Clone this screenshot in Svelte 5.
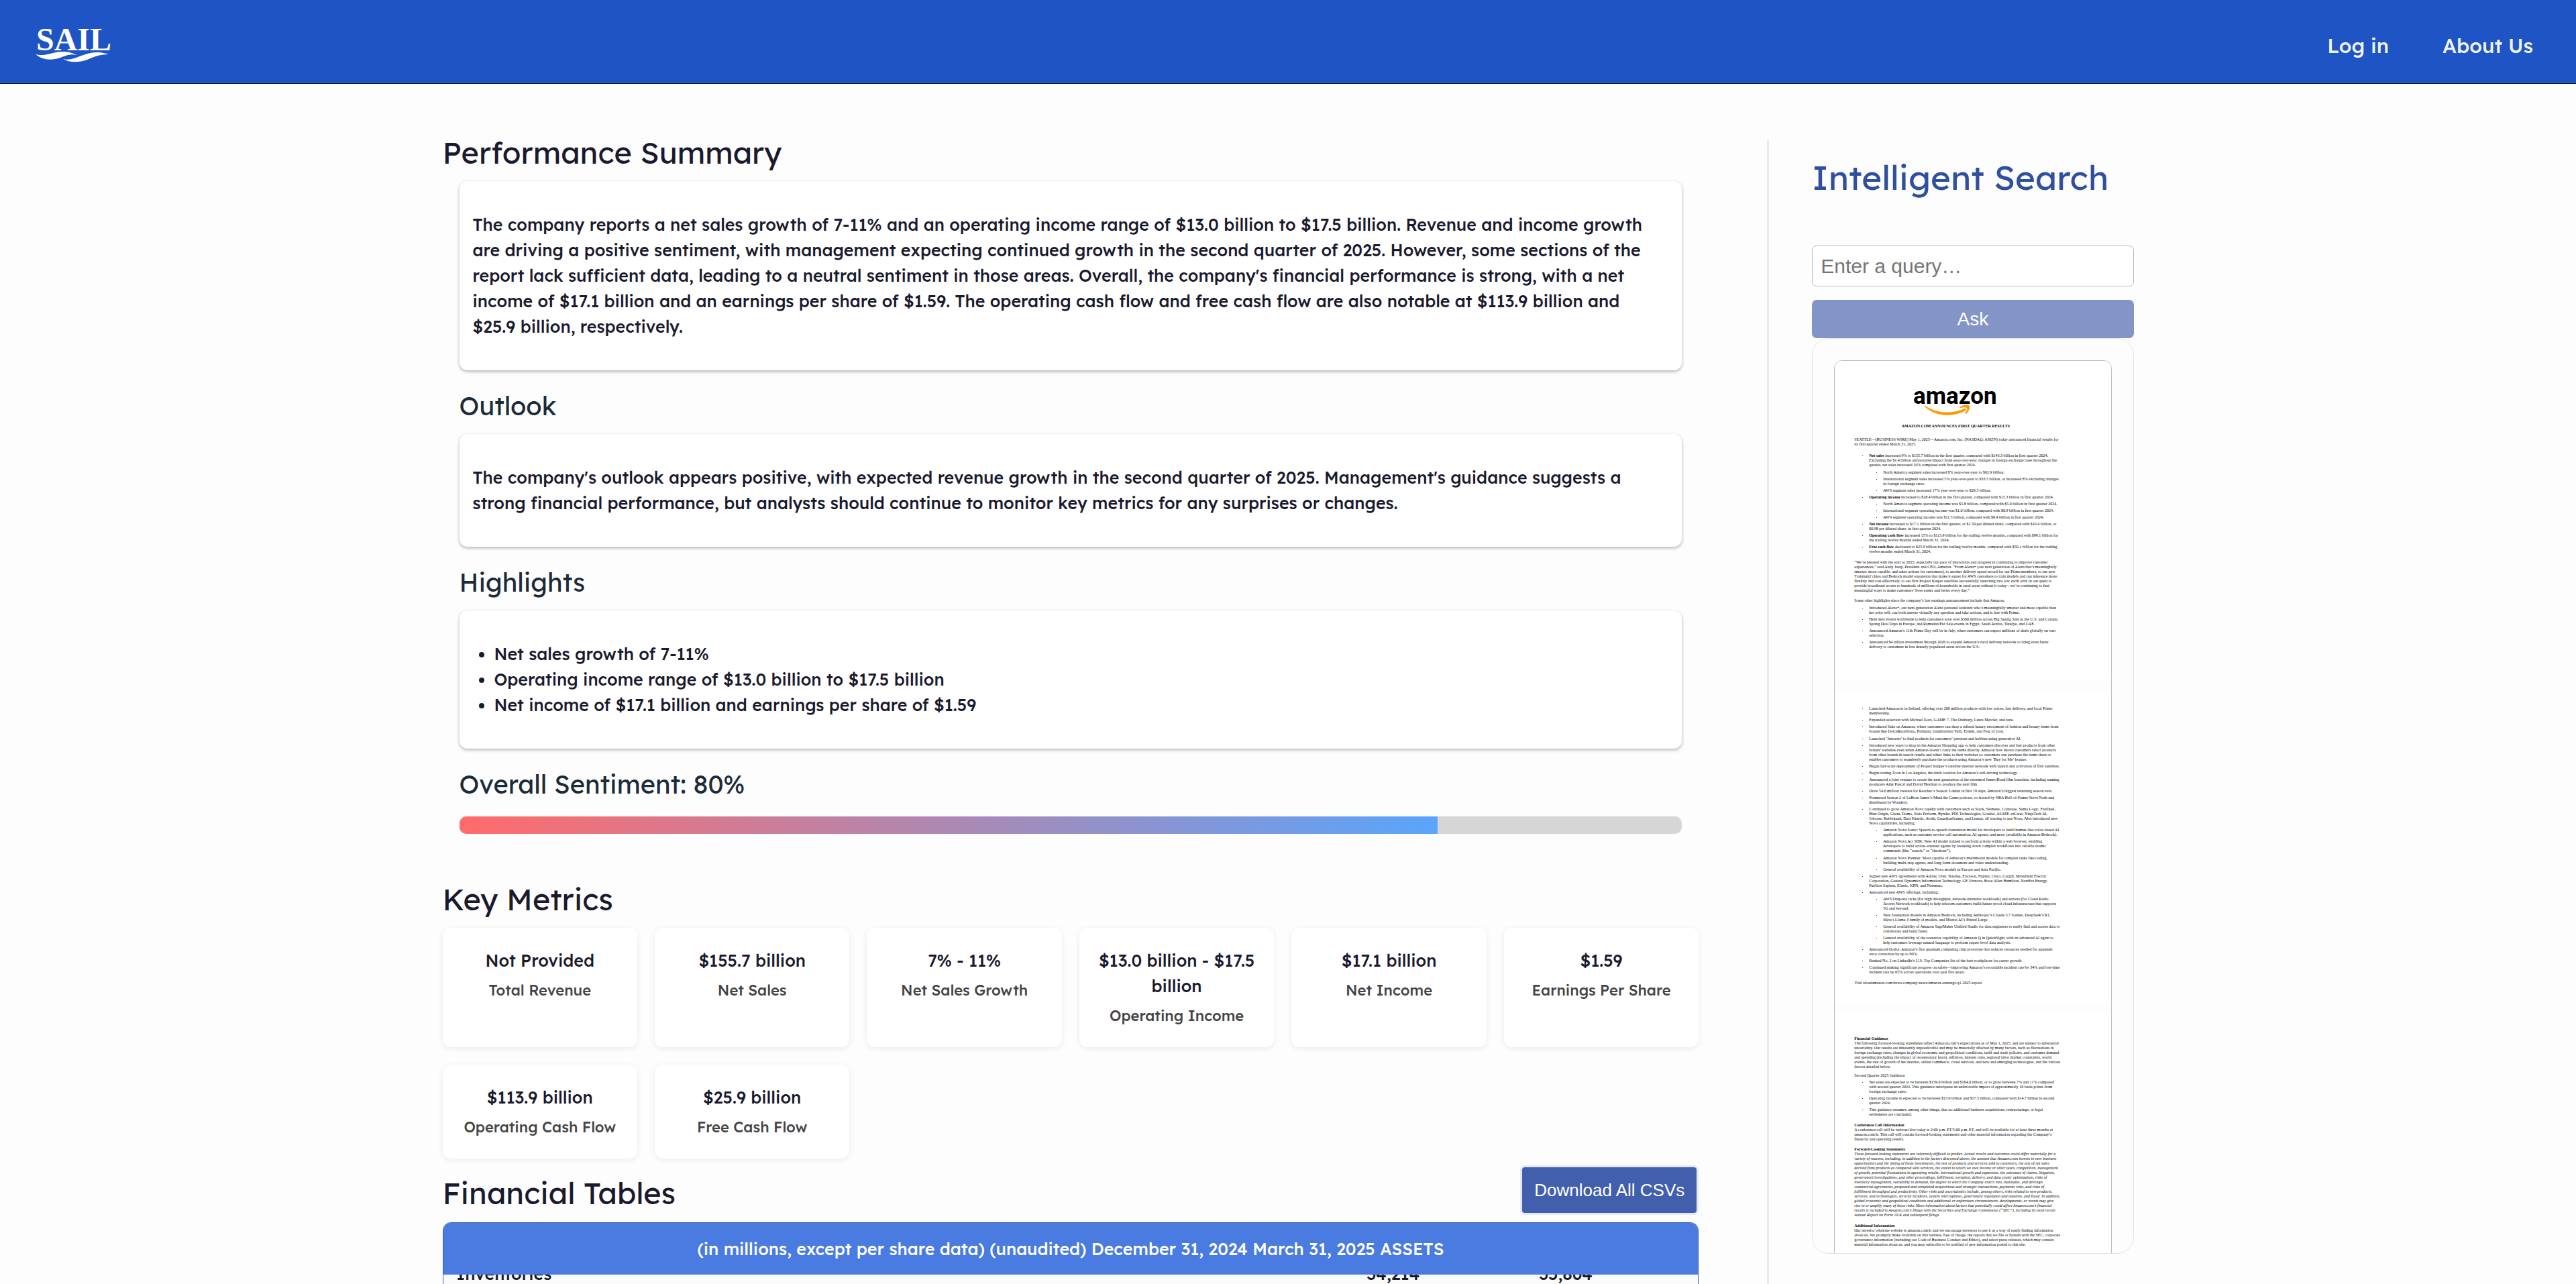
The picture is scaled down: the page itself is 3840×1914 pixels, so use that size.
<script lang="ts">
	import { onMount } from 'svelte';

	interface Metric {
		value: string;
		label: string;
	}

	interface Block {
		kind: 'title' | 'p' | 'h' | 'li' | 'sub' | 'em';
		text: string;
		lead?: string;
		gap?: number;
	}

	const summary =
		"The company reports a net sales growth of 7-11% and an operating income range of $13.0 billion to $17.5 billion. Revenue and income growth are driving a positive sentiment, with management expecting continued growth in the second quarter of 2025. However, some sections of the report lack sufficient data, leading to a neutral sentiment in those areas. Overall, the company's financial performance is strong, with a net income of $17.1 billion and an earnings per share of $1.59. The operating cash flow and free cash flow are also notable at $113.9 billion and $25.9 billion, respectively.";
	const outlook =
		"The company's outlook appears positive, with expected revenue growth in the second quarter of 2025. Management's guidance suggests a strong financial performance, but analysts should continue to monitor key metrics for any surprises or changes.";
	const highlights = [
		'Net sales growth of 7-11%',
		'Operating income range of $13.0 billion to $17.5 billion',
		'Net income of $17.1 billion and earnings per share of $1.59'
	];
	const sentiment = 80;

	const metrics: Metric[] = [
		{ value: 'Not Provided', label: 'Total Revenue' },
		{ value: '$155.7 billion', label: 'Net Sales' },
		{ value: '7% - 11%', label: 'Net Sales Growth' },
		{ value: '$13.0 billion - $17.5 billion', label: 'Operating Income' },
		{ value: '$17.1 billion', label: 'Net Income' },
		{ value: '$1.59', label: 'Earnings Per Share' },
		{ value: '$113.9 billion', label: 'Operating Cash Flow' },
		{ value: '$25.9 billion', label: 'Free Cash Flow' }
	];

	const rows = [
		['Inventories', '34,214', '35,864'],
		['Accounts receivable, net and other', '55,451', '54,216'],
		['Total current assets', '190,867', '184,645']
	];

	const pages: Block[][] = [
		[
			{ kind: 'title', text: 'AMAZON.COM ANNOUNCES FIRST QUARTER RESULTS' },
			{ kind: 'p', gap: 13, text: 'SEATTLE—(BUSINESS WIRE) May 1, 2025—Amazon.com, Inc. (NASDAQ: AMZN) today announced financial results for\nits first quarter ended March 31, 2025.' },
			{ kind: 'li', gap: 10, lead: 'Net sales', text: ' increased 9% to $155.7 billion in the first quarter, compared with $143.3 billion in first quarter 2024.\nExcluding the $1.4 billion unfavorable impact from year-over-year changes in foreign exchange rates throughout the\nquarter, net sales increased 10% compared with first quarter 2024.' },
			{ kind: 'sub', gap: 4, text: 'North America segment sales increased 8% year-over-year to $92.9 billion.' },
			{ kind: 'sub', text: 'International segment sales increased 5% year-over-year to $33.5 billion, or increased 8% excluding changes\nin foreign exchange rates.' },
			{ kind: 'sub', text: 'AWS segment sales increased 17% year-over-year to $29.3 billion.' },
			{ kind: 'li', lead: 'Operating income', text: ' increased to $18.4 billion in the first quarter, compared with $15.3 billion in first quarter 2024.' },
			{ kind: 'sub', text: 'North America segment operating income was $5.8 billion, compared with $5.0 billion in first quarter 2024.' },
			{ kind: 'sub', text: 'International segment operating income was $1.0 billion, compared with $0.9 billion in first quarter 2024.' },
			{ kind: 'sub', text: 'AWS segment operating income was $11.5 billion, compared with $9.4 billion in first quarter 2024.' },
			{ kind: 'li', lead: 'Net income', text: ' increased to $17.1 billion in the first quarter, or $1.59 per diluted share, compared with $10.4 billion, or\n$0.98 per diluted share, in first quarter 2024.' },
			{ kind: 'li', lead: 'Operating cash flow', text: ' increased 15% to $113.9 billion for the trailing twelve months, compared with $99.1 billion for\nthe trailing twelve months ended March 31, 2024.' },
			{ kind: 'li', lead: 'Free cash flow', text: ' decreased to $25.9 billion for the trailing twelve months, compared with $50.1 billion for the trailing\ntwelve months ended March 31, 2024.' },
			{ kind: 'p', gap: 9, text: '“We’re pleased with the start to 2025, especially our pace of innovation and progress in continuing to improve customer\nexperiences,” said Andy Jassy, President and CEO, Amazon. “From Alexa+ (our next generation of Alexa that’s meaningfully\nsmarter, more capable, and takes actions for customers), to another delivery speed record for our Prime members, to our new\nTrainium2 chips and Bedrock model expansion that make it easier for AWS customers to train models and run inference more\nflexibly and cost-effectively, to our first Project Kuiper satellites successfully launching into low earth orbit in our quest to\nprovide broadband access to hundreds of millions of households in rural areas without it today—we’re continuing to find\nmeaningful ways to make customers’ lives easier and better every day.”' },
			{ kind: 'p', gap: 8, text: 'Some other highlights since the company’s last earnings announcement include that Amazon:' },
			{ kind: 'li', gap: 4, text: 'Introduced Alexa+, our next-generation Alexa personal assistant who’s meaningfully smarter and more capable than\nher prior self, can both answer virtually any question and take actions, and is free with Prime.' },
			{ kind: 'li', text: 'Held deal events worldwide to help customers save over $500 million across Big Spring Sale in the U.S. and Canada,\nSpring Deal Days in Europe, and Ramadan/Eid Sale events in Egypt, Saudi Arabia, Türkiye, and UAE.' },
			{ kind: 'li', text: 'Announced Amazon’s 11th Prime Day will be in July, when customers can expect millions of deals globally on vast\nselection.' },
			{ kind: 'li', text: 'Announced $4 billion investment through 2026 to expand Amazon’s rural delivery network to bring even faster\ndelivery to customers in less densely populated areas across the U.S.' }
		],
		[
			{ kind: 'li', gap: 0, text: 'Launched Amazon.ie in Ireland, offering over 200 million products with low prices, fast delivery, and local Prime\nmembership.' },
			{ kind: 'li', text: 'Expanded selection with Michael Kors, GAME 7, The Ordinary, Laura Mercier, and tarte.' },
			{ kind: 'li', text: 'Introduced Saks on Amazon, where customers can shop a refined luxury assortment of fashion and beauty items from\nbrands like Dolce&Gabbana, Balmain, Giambattista Valli, Erdem, and Fear of God.' },
			{ kind: 'li', gap: 4, text: 'Launched ‘Interests’ to find products for customers’ passions and hobbies using generative AI.' },
			{ kind: 'li', text: 'Introduced new ways to shop in the Amazon Shopping app to help customers discover and buy products from other\nbrands’ websites even when Amazon doesn’t carry the items directly. Amazon now shows customers select products\nfrom other brands in search results and either links to their websites so customers can purchase the items there or\nenables customers to seamlessly purchase the products using Amazon’s new ‘Buy for Me’ feature.' },
			{ kind: 'li', text: 'Began full-scale deployment of Project Kuiper’s satellite internet network with launch and activation of first satellites.' },
			{ kind: 'li', text: 'Began testing Zoox in Los Angeles, the sixth location for Amazon’s self-driving technology.' },
			{ kind: 'li', text: 'Announced a joint venture to create the next generation of the esteemed James Bond film franchise, including naming\nproducers Amy Pascal and David Heyman to produce the next film.' },
			{ kind: 'li', text: 'Drew 54.6 million viewers for Reacher’s Season 3 debut in first 19 days, Amazon’s biggest returning season ever.' },
			{ kind: 'li', text: 'Premiered Season 2 of LeBron James’s Mind the Game podcast, co-hosted by NBA Hall-of-Famer Steve Nash and\ndistributed by Wondery.' },
			{ kind: 'li', text: 'Continued to grow Amazon Nova rapidly with customers such as Slack, Siemens, Coinbase, Sumo Logic, FanDuel,\nBlue Origin, Glean, Domo, Stats Perform, Bynder, PDI Technologies, Gradial, ASAPP, ezCater, NinjaTech AI,\nJobcase, Rabbrhand, Data Kinetic, Avahi, GuardianGamer, and Lennar, all starting to use Nova. Also introduced new\nNova capabilities, including:' },
			{ kind: 'sub', text: 'Amazon Nova Sonic: Speech-to-speech foundation model for developers to build human-like voice-based AI\napplications, such as customer service call automation, AI agents, and more (available in Amazon Bedrock).' },
			{ kind: 'sub', text: 'Amazon Nova Act SDK: New AI model trained to perform actions within a web browser, enabling\ndevelopers to build action-oriented agents by breaking down complex workflows into reliable atomic\ncommands (like “search,” or “checkout”).' },
			{ kind: 'sub', gap: 4, text: 'Amazon Nova Premier: Most capable of Amazon’s multimodal models for complex tasks like coding,\nbuilding multi-step agents, and long-form document and video understanding.' },
			{ kind: 'sub', text: 'General availability of Amazon Nova models in Europe and Asia Pacific.' },
			{ kind: 'li', text: 'Signed new AWS agreements with Adobe, Uber, Nasdaq, Ericsson, Fujitsu, Cisco, Cargill, Mitsubishi Electric\nCorporation, General Dynamics Information Technology, GE Vernova, Booz Allen Hamilton, NextEra Energy,\nPublicis Sapient, Elastic, KPN, and Netsmart.' },
			{ kind: 'li', text: 'Announced new AWS offerings, including:' },
			{ kind: 'sub', text: 'AWS Outposts racks (for high throughput, network-intensive workloads) and servers (for Cloud Radio\nAccess Network workloads) to help telecom customers build future-proof cloud infrastructure that supports\n5G and beyond.' },
			{ kind: 'sub', text: 'New foundation models in Amazon Bedrock, including Anthropic’s Claude 3.7 Sonnet, DeepSeek’s R1,\nMeta’s Llama 4 family of models, and Mistral AI’s Pixtral Large.' },
			{ kind: 'sub', text: 'General availability of Amazon SageMaker Unified Studio for data engineers to easily find and access data to\ncollaborate and build faster.' },
			{ kind: 'sub', text: 'General availability of the scenarios capability of Amazon Q in QuickSight, with an advanced AI agent to\nhelp customers leverage natural language to perform expert-level data analysis.' },
			{ kind: 'li', text: 'Announced Ocelot, Amazon’s first quantum computing chip prototype that reduces resources needed for quantum\nerror correction by up to 90%.' },
			{ kind: 'li', text: 'Ranked No. 2 on LinkedIn’s U.S. Top Companies list of the best workplaces for career growth.' },
			{ kind: 'li', text: 'Continued making significant progress on safety—improving Amazon’s recordable incident rate by 34% and lost-time\nincident rate by 65% across operations over past five years.' },
			{ kind: 'p', gap: 9, text: 'Visit aboutamazon.com/news/company-news/amazon-earnings-q1-2025-report.' }
		],
		[
			{ kind: 'h', gap: 0, text: 'Financial Guidance' },
			{ kind: 'p', text: 'The following forward-looking statements reflect Amazon.com’s expectations as of May 1, 2025, and are subject to substantial\nuncertainty. Our results are inherently unpredictable and may be materially affected by many factors, such as fluctuations in\nforeign exchange rates, changes in global economic and geopolitical conditions, tariff and trade policies, and customer demand\nand spending (including the impact of recessionary fears), inflation, interest rates, regional labor market constraints, world\nevents, the rate of growth of the internet, online commerce, cloud services, and new and emerging technologies, and the various\nfactors detailed below.' },
			{ kind: 'p', gap: 6, text: 'Second Quarter 2025 Guidance' },
			{ kind: 'li', text: 'Net sales are expected to be between $159.0 billion and $164.0 billion, or to grow between 7% and 11% compared\nwith second quarter 2024. This guidance anticipates an unfavorable impact of approximately 10 basis points from\nforeign exchange rates.' },
			{ kind: 'li', text: 'Operating income is expected to be between $13.0 billion and $17.5 billion, compared with $14.7 billion in second\nquarter 2024.' },
			{ kind: 'li', text: 'This guidance assumes, among other things, that no additional business acquisitions, restructurings, or legal\nsettlements are concluded.' },
			{ kind: 'h', gap: 9, text: 'Conference Call Information' },
			{ kind: 'p', text: 'A conference call will be webcast live today at 2:00 p.m. PT/5:00 p.m. ET, and will be available for at least three months at\namazon.com/ir. This call will contain forward-looking statements and other material information regarding the Company’s\nfinancial and operating results.' },
			{ kind: 'h', gap: 8, text: 'Forward-Looking Statements' },
			{ kind: 'em', text: 'These forward-looking statements are inherently difficult to predict. Actual results and outcomes could differ materially for a\nvariety of reasons, including, in addition to the factors discussed above, the amount that Amazon.com invests in new business\nopportunities and the timing of those investments, the mix of products and services sold to customers, the mix of net sales\nderived from products as compared with services, the extent to which we owe income or other taxes, competition, management\nof growth, potential fluctuations in operating results, international growth and expansion, the outcomes of claims, litigation,\ngovernment investigations, and other proceedings, fulfillment, sortation, delivery, and data center optimization, risks of\ninventory management, variability in demand, the degree to which the Company enters into, maintains, and develops\ncommercial agreements, proposed and completed acquisitions and strategic transactions, payments risks, and risks of\nfulfillment throughput and productivity. Other risks and uncertainties include, among others, risks related to new products,\nservices, and technologies, security incidents, system interruptions, government regulation and taxation, and fraud. In addition,\nglobal economic and geopolitical conditions and additional or unforeseen circumstances, developments, or events may give\nrise to or amplify many of these risks. More information about factors that potentially could affect Amazon.com’s financial\nresults is included in Amazon.com’s filings with the Securities and Exchange Commission (“SEC”), including its most recent\nAnnual Report on Form 10-K and subsequent filings.' },
			{ kind: 'h', gap: 9, text: 'Additional Information' },
			{ kind: 'p', text: 'Our investor relations website is amazon.com/ir and we encourage investors to use it as a way of easily finding information\nabout us. We promptly make available on this website, free of charge, the reports that we file or furnish with the SEC, corporate\ngovernance information (including our Code of Business Conduct and Ethics), and select press releases, which may contain\nmaterial information about us, and you may subscribe to be notified of new information posted to this site.' },
			{ kind: 'h', gap: 8, text: 'About Amazon' }
		]
	];

	let query = $state('');
	let tableWrap: HTMLDivElement;

	// start with the first row half under the sticky header
	onMount(() => {
		tableWrap.scrollTop = 33;
	});
</script>

<div class="page">
	<header>
		<a class="brand" href="/" aria-label="SAIL home">
			<svg width="116" height="64" viewBox="0 0 116 64">
				<text x="2" y="42" font-size="48">SAIL</text>
				<path d="M1 48 C16 52 28 43 45 44 C54 45 60 48 64 49 C52 47 46 50 38 53 C23 58 11 56 1 48 Z" />
				<path d="M42 55 C60 59 72 44 94 45 C101 45 106 47 110 48 C95 48 88 52 78 56 C64 61 51 60 42 55 Z" />
			</svg>
		</a>
		<nav>
			<a href="/login">Log in</a>
			<a href="/about">About Us</a>
		</nav>
	</header>

	<div class="container">
		<main>
			<h2>Performance Summary</h2>
			<section class="report">
				<div class="card">
					<p>{summary}</p>
				</div>
				<h3>Outlook</h3>
				<div class="card">
					<p>{outlook}</p>
				</div>
				<h3>Highlights</h3>
				<div class="card">
					<ul>
						{#each highlights as item}
							<li>{item}</li>
						{/each}
					</ul>
				</div>
				<h3>Overall Sentiment: {sentiment}%</h3>
				<div class="bar">
					<div class="fill" style="width: {sentiment}%"></div>
				</div>
			</section>

			<h2>Key Metrics</h2>
			<div class="metrics">
				{#each metrics as metric}
					<div class="metric">
						<div class="value">{metric.value}</div>
						<div class="label">{metric.label}</div>
					</div>
				{/each}
			</div>

			<div class="tables-head">
				<h2>Financial Tables</h2>
				<button type="button" class="download">Download All CSVs</button>
			</div>
			<div class="table-wrap" bind:this={tableWrap}>
				<table>
					<colgroup>
						<col />
						<col class="num" />
						<col class="num" />
					</colgroup>
					<thead>
						<tr>
							<th colspan="3">(in millions, except per share data) (unaudited) December 31, 2024 March 31, 2025 ASSETS</th>
						</tr>
					</thead>
					<tbody>
						{#each rows as row}
							<tr>
								{#each row as cell}
									<td>{cell}</td>
								{/each}
							</tr>
						{/each}
					</tbody>
				</table>
			</div>
		</main>

		<aside>
			<h1>Intelligent Search</h1>
			<input type="text" aria-label="Query" placeholder="Enter a query…" bind:value={query} />
			<button type="button" class="ask" disabled={!query}>Ask</button>
			<div class="viewer">
				<div class="document">
					{#each pages as blocks, i}
						<div class="sheet">
							{#if i === 0}
								<svg class="amazon" width="126" height="44" viewBox="0 0 126 44">
									<text x="0" y="26" font-size="35">amazon</text>
									<path d="M18 29 C36 41 58 41 76 33 C78 32 80 34 78 36 C60 46 34 46 17 30 C16 29 17 28 18 29 Z" />
									<path d="M69 31 C74 27 82 27 84 29 C85 32 83 37 79 41 C78 41 77 41 78 39 C80 36 81 33 80 32 C78 31 74 31 70 32 C69 32 69 31 69 31 Z" />
								</svg>
							{/if}
							{#each blocks as block}
								<div class="block {block.kind}" style:margin-top={block.gap === undefined ? null : `${block.gap}px`}>
									{#if block.lead}<b>{block.lead}</b>{/if}{block.text}
								</div>
							{/each}
						</div>
					{/each}
				</div>
			</div>
		</aside>
	</div>
</div>

<style>
	:global(body) {
		background: #fdfdfd;
	}

	.page {
		display: flex;
		flex-direction: column;
		height: 100vh;
		overflow: hidden;
		box-sizing: border-box;
		font-family: Lexend, Inter, sans-serif;
		font-size: 25px;
		font-weight: 500;
		line-height: 38px;
		color: #1a1a2e;
	}

	.page *,
	.page *::before {
		box-sizing: border-box;
	}

	header {
		display: flex;
		flex-shrink: 0;
		align-items: center;
		justify-content: space-between;
		height: 125px;
		padding: 6px 64px 0 52px;
		background: #1e54c4;
		border-bottom: 1px solid #1a1a2e;
	}

	.brand svg {
		display: block;
		fill: #fff;
	}

	.brand text {
		font-family: 'Liberation Serif', serif;
		font-weight: 700;
	}

	nav {
		display: flex;
		gap: 80px;
		padding-top: 6px;
	}

	nav a {
		font-size: 30px;
		color: #f0f4f4;
		text-decoration: none;
	}

	.container {
		display: grid;
		grid-template-columns: minmax(0, 24fr) minmax(0, 7fr);
		grid-template-rows: minmax(0, 1fr);
		gap: 102px;
		flex: 1;
		min-height: 0;
		width: 100%;
		max-width: 2521px;
		margin: 0 auto;
		padding-top: 83px;
	}

	main {
		min-width: 0;
	}

	h2 {
		margin: 0 0 24px;
		font-size: 45px;
		font-weight: 400;
		line-height: 38px;
	}

	.report {
		padding: 0 25px;
		margin-bottom: 78px;
	}

	h3 {
		margin: 33px 0 22px;
		font-size: 38px;
		font-weight: 400;
		line-height: 40px;
		color: #1c2b39;
	}

	.card {
		padding: 46px 32px 46px 20px;
		background: #fff;
		border-radius: 12px;
		box-shadow: 0 2px 5px rgba(0, 0, 0, 0.3);
	}

	.card p,
	.card ul {
		margin: 0;
	}

	.card ul {
		padding-left: 32px;
	}

	.bar {
		height: 26px;
		margin-top: 28px;
		overflow: hidden;
		background: #d6d6d6;
		border-radius: 10px;
	}

	.fill {
		height: 100%;
		background: linear-gradient(90deg, #ff6b6b, #5aa5fb);
	}

	.metrics {
		display: grid;
		grid-template-columns: repeat(6, minmax(0, 1fr));
		gap: 26px;
	}

	.metric {
		padding: 30px 24px;
		text-align: center;
		background: #fff;
		border-radius: 12px;
		box-shadow: 0 2px 8px rgba(0, 0, 0, 0.08);
	}

	.label {
		margin-top: 8px;
		font-size: 22px;
		line-height: 34px;
		color: #444;
	}

	.tables-head {
		display: flex;
		align-items: flex-end;
		justify-content: space-between;
		margin: 10px 0 11px;
	}

	.tables-head h2 {
		margin-bottom: 14px;
	}

	.download {
		height: 74px;
		padding: 0 18px;
		font-family: 'Liberation Sans', Arial, sans-serif;
		font-size: 26px;
		color: #fff;
		background: #425fae;
		border: 3px solid #e6e9f1;
		border-radius: 7px;
	}

	.table-wrap {
		max-height: 200px;
		overflow-y: auto;
		scrollbar-width: none;
		border: 1px solid #3c5ca8;
		border-radius: 12px;
	}

	table {
		width: 100%;
		table-layout: fixed;
		border-collapse: collapse;
	}

	.num {
		width: 257px;
	}

	th {
		position: sticky;
		top: 0;
		height: 77px;
		padding: 0 20px;
		font-weight: 500;
		color: #fff;
		background: #4a7be0;
	}

	td {
		height: 64px;
		padding: 0 20px;
		background: #fafafa;
	}

	aside {
		display: flex;
		flex-direction: column;
		min-height: 0;
		padding: 30px 0 45px 64px;
		border-left: 3px solid #ebebeb;
	}

	h1 {
		margin: 0 0 76px;
		font-size: 51px;
		font-weight: 400;
		line-height: 52px;
		white-space: nowrap;
		color: #2f4f9f;
	}

	input {
		flex-shrink: 0;
		width: 100%;
		height: 61px;
		margin-bottom: 20px;
		padding: 0 12px;
		font-family: 'Liberation Sans', Arial, sans-serif;
		font-size: 30px;
		background: #fff;
		border: 1px solid #bbb;
		border-radius: 7px;
	}

	input::placeholder {
		color: #757575;
	}

	.ask {
		flex-shrink: 0;
		height: 57px;
		font-family: 'Liberation Sans', Arial, sans-serif;
		font-size: 28px;
		color: #fff;
		background: #8395c6;
		border: none;
		border-radius: 7px;
	}

	.viewer {
		flex: 1;
		min-height: 0;
		padding: 32px 32px 0;
		overflow: hidden;
		border: 1px solid #e4e4e4;
		border-radius: 25px;
	}

	.document {
		overflow: hidden;
		border: 1px solid #bbb;
		border-radius: 12px;
		font-family: 'Liberation Serif', serif;
		font-size: 6px;
		font-weight: 400;
		line-height: 7px;
		color: #000;
	}

	.sheet {
		min-height: 466px;
		margin-bottom: 16px;
		padding: 24px 80px 0 29px;
		background: #fff;
	}

	.sheet:first-child {
		min-height: 475px;
		padding-top: 38px;
	}

	.sheet:nth-child(3) {
		padding-top: 34px;
	}

	.amazon {
		display: block;
		margin: 0 auto 12px;
		fill: #ff9900;
	}

	.amazon text {
		font-family: Roboto, 'Liberation Sans', sans-serif;
		font-weight: 700;
		fill: #000;
	}

	.block {
		position: relative;
		white-space: pre;
	}

	.title {
		font-weight: 700;
		text-align: center;
	}

	.h {
		font-weight: 700;
	}

	.em {
		font-style: italic;
	}

	.li,
	.sub {
		margin-top: 3px;
		margin-left: 22px;
	}

	.sub {
		margin-left: 43px;
	}

	.li::before,
	.sub::before {
		content: '';
		position: absolute;
		top: 3px;
		left: -10px;
		width: 1px;
		height: 1px;
		background: #333;
	}
</style>
